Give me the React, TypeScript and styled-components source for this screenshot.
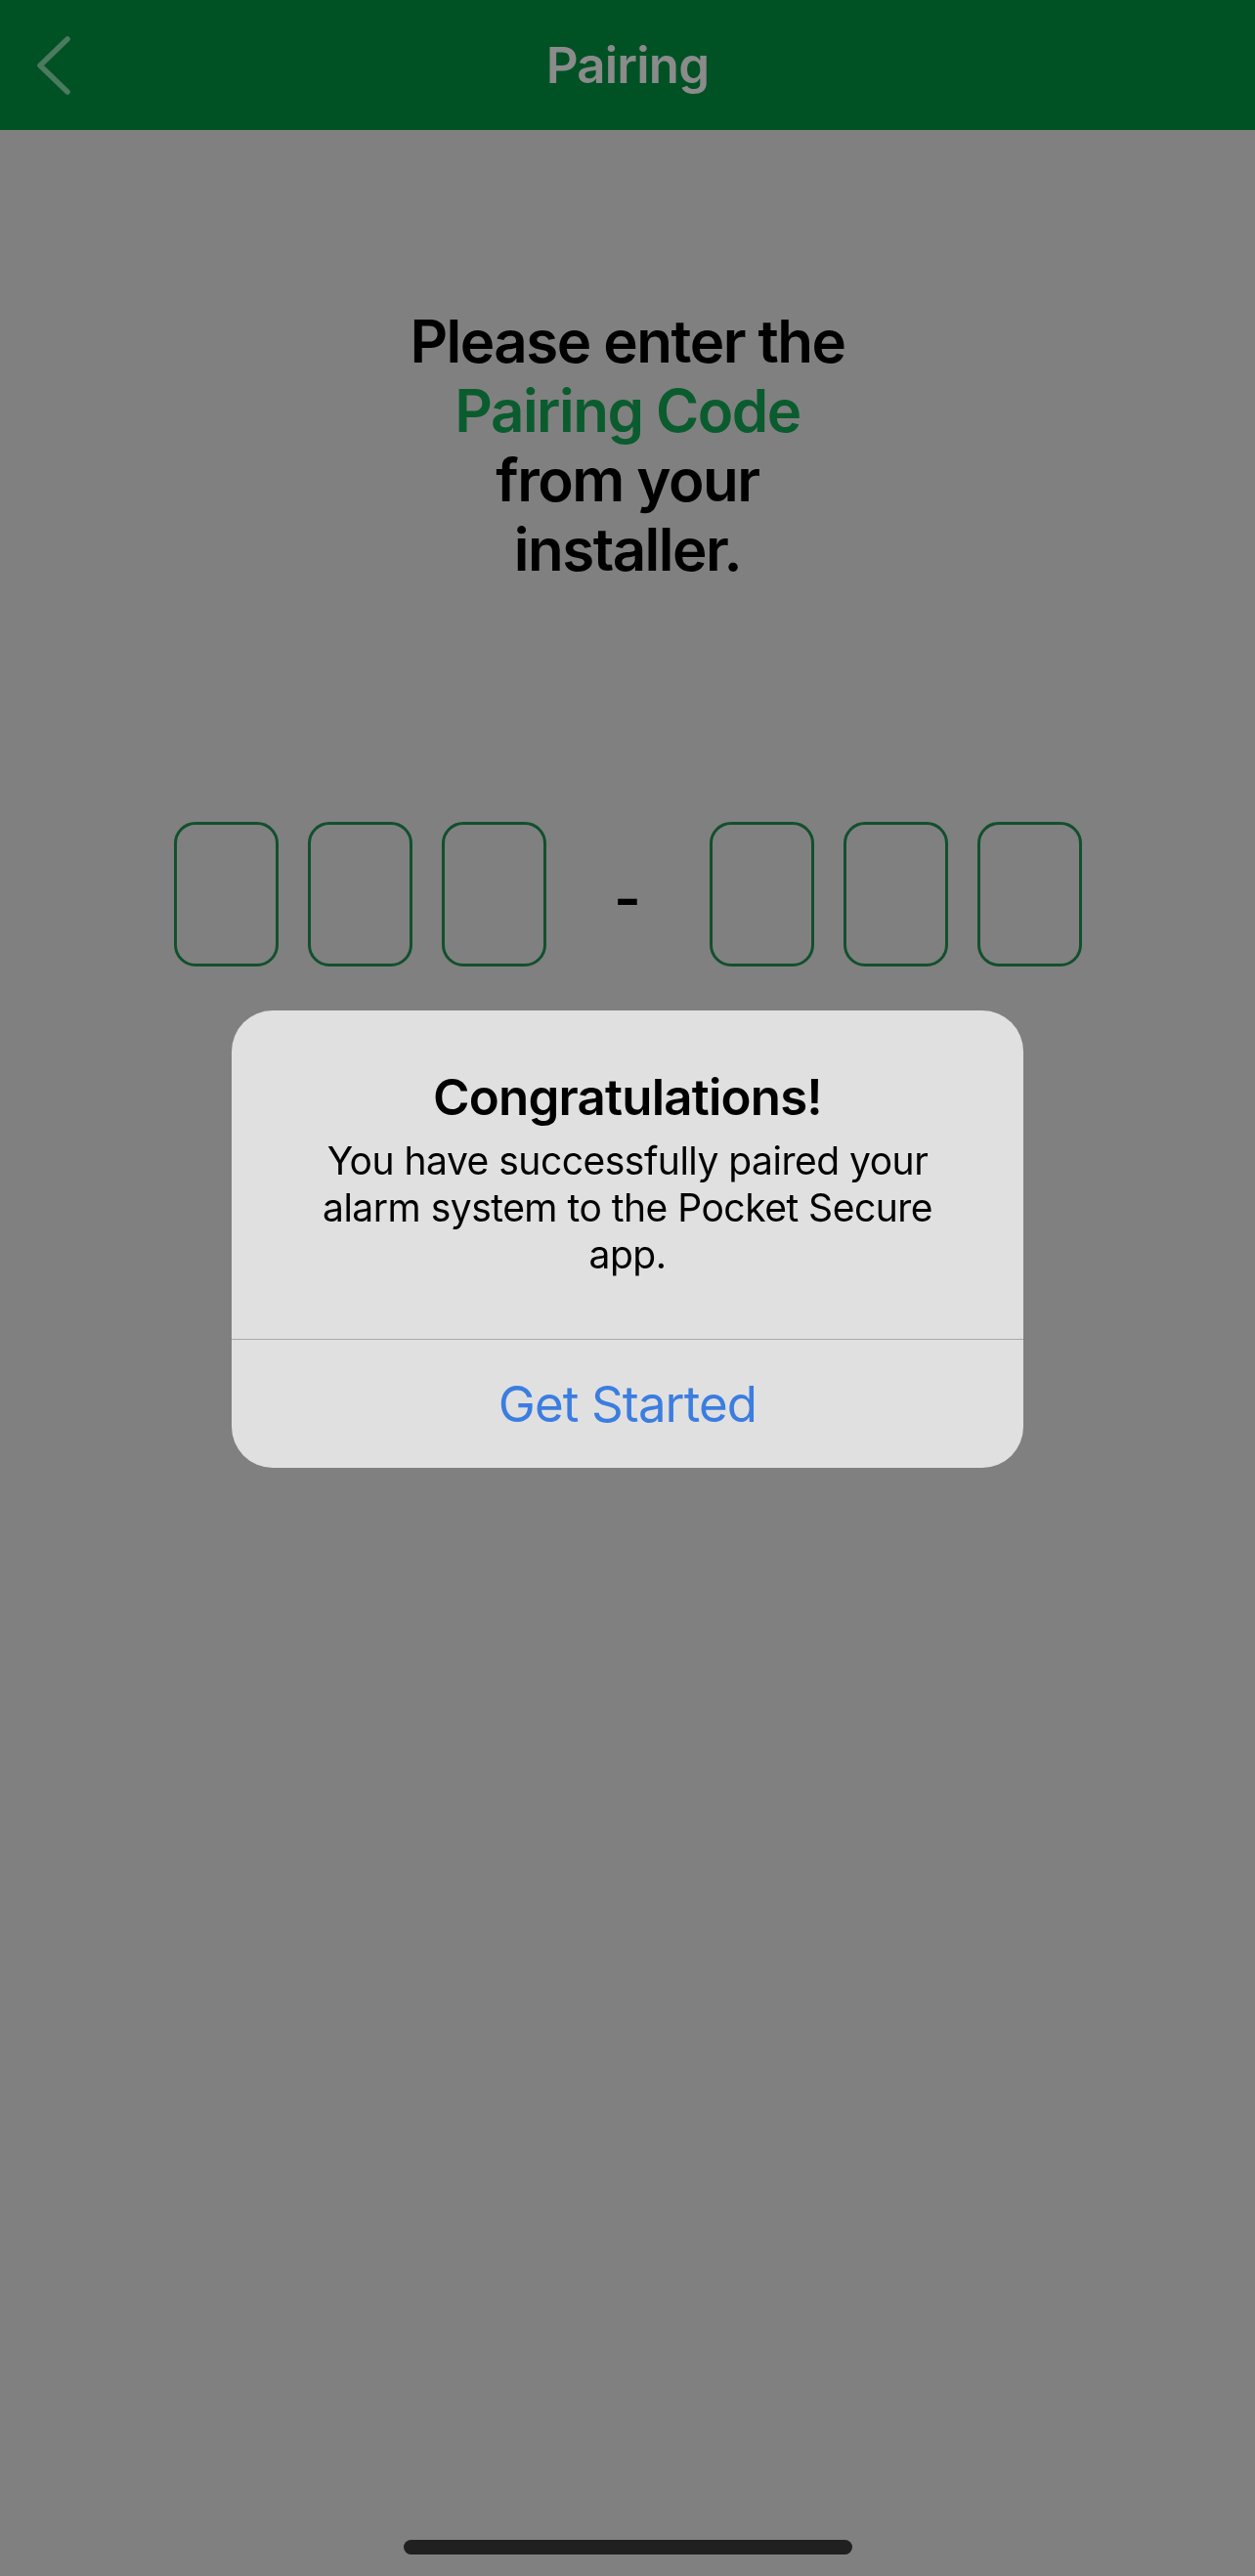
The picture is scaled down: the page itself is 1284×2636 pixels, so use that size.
import React from "react";
import styled, { createGlobalStyle } from "styled-components";

const GlobalStyle = createGlobalStyle`
  html, body {
    margin: 0;
    padding: 0;
    background: #808080;
  }
  body {
    font-family: Inter, "Noto Sans", "Liberation Sans", sans-serif;
    -webkit-font-smoothing: antialiased;
  }
`;

const Screen = styled.div`
  min-height: 100vh;
  display: flex;
  flex-direction: column;
  background: #808080;
`;

const NavBar = styled.header`
  height: 133px;
  background: #005225;
  display: grid;
  grid-template-columns: 1fr auto 1fr;
  align-items: center;
  padding: 0 37px;
  box-sizing: border-box;
`;

const BackButton = styled.button`
  justify-self: start;
  width: 40px;
  height: 60px;
  padding: 0;
  border: none;
  background: none;
  display: flex;
  align-items: center;
  cursor: pointer;
`;

const NavTitle = styled.h1`
  margin: 0;
  font-size: 51px;
  font-weight: 600;
  letter-spacing: -0.8px;
  color: #8b8b8b;
`;

const Content = styled.main`
  display: flex;
  flex-direction: column;
  align-items: center;
  padding-top: 181px;
`;

const Prompt = styled.h2`
  margin: 0;
  text-align: center;
  font-size: 60px;
  line-height: 71px;
  font-weight: 600;
  letter-spacing: -1.5px;
  color: #000;
`;

const Highlight = styled.span`
  color: #0a5c2e;
`;

const CodeRow = styled.div`
  margin-top: 243px;
  display: flex;
  gap: 30px;
`;

const DigitBox = styled.div`
  width: 107px;
  height: 148px;
  box-sizing: border-box;
  border: 3px solid #12502d;
  border-radius: 22px;
`;

const Separator = styled.span`
  width: 107px;
  display: flex;
  align-items: center;
  justify-content: center;
  font-size: 60px;
  font-weight: 600;
  color: #000;
  padding-top: 8px;
`;

const HomeIndicator = styled.div`
  margin: auto auto 22px;
  width: 459px;
  height: 15px;
  border-radius: 8px;
  background: #202020;
`;

const Overlay = styled.div`
  position: fixed;
  inset: 0;
  display: flex;
  align-items: center;
  justify-content: center;
  padding-bottom: 100px;
`;

const Alert = styled.div`
  width: 810px;
  border-radius: 42px;
  background: #e0e0e0;
  overflow: hidden;
  text-align: center;
`;

const AlertBody = styled.div`
  padding: 58px 48px 62px;
`;

const AlertTitle = styled.h3`
  margin: 0;
  font-size: 51px;
  line-height: 61px;
  font-weight: 600;
  letter-spacing: -0.8px;
  color: #000;
`;

const AlertMessage = styled.p`
  margin: 11px 0 0;
  font-size: 39px;
  line-height: 48px;
  font-weight: 400;
  letter-spacing: -0.5px;
  color: #000;
`;

const AlertAction = styled.button`
  display: block;
  width: 100%;
  height: 132px;
  border: none;
  border-top: 1px solid #a9a9a9;
  background: none;
  font-family: inherit;
  font-size: 51px;
  font-weight: 400;
  letter-spacing: -0.9px;
  color: #3b7de0;
  cursor: pointer;
`;

const ChevronLeft = () => (
  <svg width="40" height="60" viewBox="0 0 40 60" fill="none">
    <path
      d="M32 3 L4 30 L32 57"
      stroke="#4b7a5f"
      strokeWidth="5.5"
      strokeLinecap="round"
      strokeLinejoin="round"
    />
  </svg>
);

export default function App() {
  return (
    <>
      <GlobalStyle />
      <Screen>
        <NavBar>
          <BackButton aria-label="Back">
            <ChevronLeft />
          </BackButton>
          <NavTitle>Pairing</NavTitle>
          <span />
        </NavBar>

        <Content>
          <Prompt>
            Please enter the
            <br />
            <Highlight>Pairing Code</Highlight>
            <br />
            from your
            <br />
            installer.
          </Prompt>

          <CodeRow>
            <DigitBox />
            <DigitBox />
            <DigitBox />
            <Separator>-</Separator>
            <DigitBox />
            <DigitBox />
            <DigitBox />
          </CodeRow>
        </Content>

        <HomeIndicator />
      </Screen>

      <Overlay>
        <Alert role="alertdialog">
          <AlertBody>
            <AlertTitle>Congratulations!</AlertTitle>
            <AlertMessage>
              You have successfully paired your
              <br />
              alarm system to the Pocket Secure
              <br />
              app.
            </AlertMessage>
          </AlertBody>
          <AlertAction>Get Started</AlertAction>
        </Alert>
      </Overlay>
    </>
  );
}
